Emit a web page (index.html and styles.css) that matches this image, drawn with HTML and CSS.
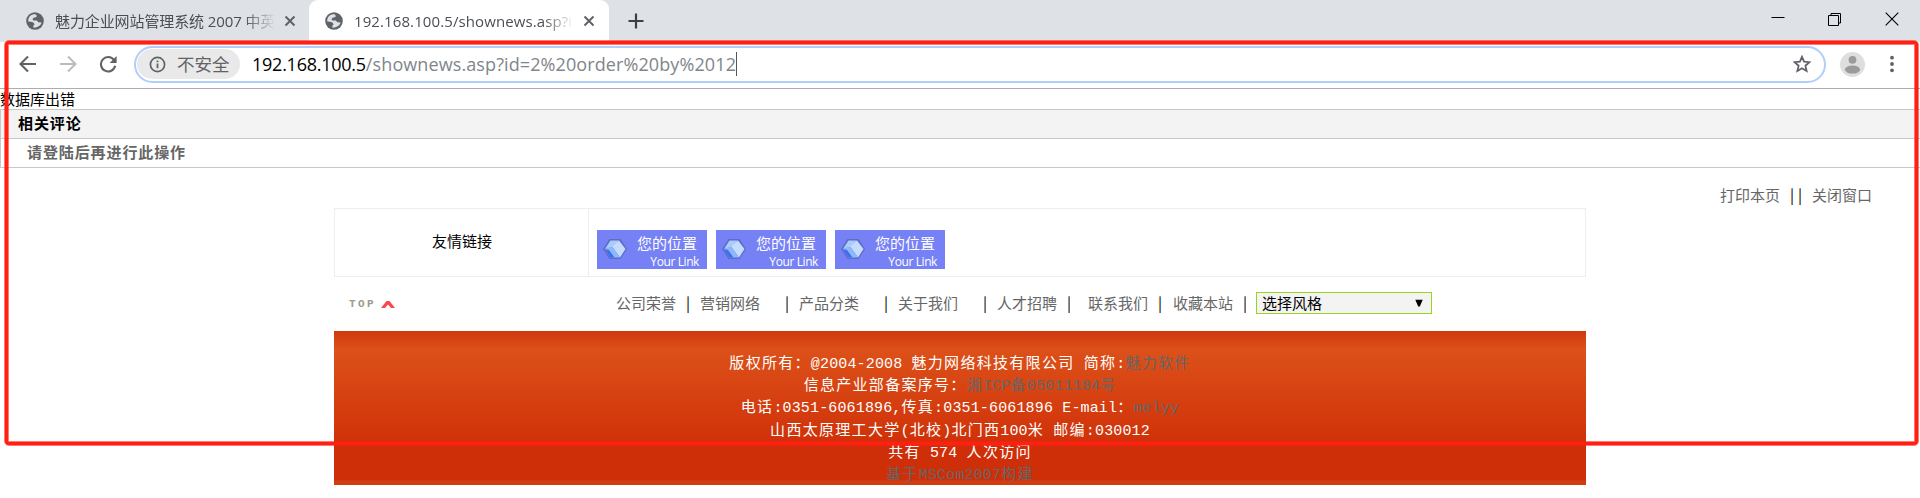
FILE: index.html
```html
<!DOCTYPE html>
<html lang="zh-CN">
<head>
<meta charset="utf-8">
<title>192.168.100.5/shownews.asp</title>
<link rel="stylesheet" href="styles.css">
</head>
<body>
<svg width="0" height="0" class="defs">
  <symbol id="globe" viewBox="0 0 18 18"><circle cx="9" cy="9" r="8.8" fill="#5f6368"/><path d="M9.500 2.200C6 2 3 4 2.300 7.200L2.200 9.500L5 9.800L7.500 10.500L8.600 12.400L7.200 13.700L7.600 15.700C11 16 14.500 14 15.600 10.600L12.300 10.200L10.800 8.600L7.300 8.400L6.500 7L8 5.600L10.200 5.300L10.800 3.700Z" fill="#dee1e6"/></symbol>
  <symbol id="cross" viewBox="0 0 12 12"><path d="M1.500 1.500L10.500 10.500M10.500 1.500L1.500 10.500" stroke="#5f6368" stroke-width="2" fill="none"/></symbol>
  <symbol id="cube" viewBox="0 0 24 20"><path d="M6.500 0H17.500L24 10L17.500 20H6.500L0 10Z" fill="#5f6bc8"/><path d="M7.500 1.500H16L9 8L2 10Z" fill="#a9ccfa"/><path d="M16 1.500L22.500 10L17 18.500L9 7.500Z" fill="#c6dcff"/><path d="M1.800 10L9 7.500L17 18.500H7.500Z" fill="#8eb8fa"/><path d="M1.800 10L6 11L11.500 18.500H7.500Z" fill="#3c6ef2"/></symbol>
</svg>

<header class="tabs">
  <div class="tab">
    <svg class="globe"><use href="#globe"/></svg>
    <span class="label label-first">魅力企业网站管理系统 2007 中英</span>
    <svg class="cross"><use href="#cross"/></svg>
  </div>
  <div class="tab active">
    <svg class="globe"><use href="#globe"/></svg>
    <span class="label label-url">192.168.100.5/shownews.asp?i</span>
    <svg class="cross"><use href="#cross"/></svg>
  </div>
  <svg class="plus" viewBox="0 0 16 16"><path d="M8 .5V15.500M.5 8H15.500" stroke="#3c4043" stroke-width="2.200"/></svg>
  <div class="controls">
    <svg viewBox="0 0 14 14"><path d="M.5 5.500H13.500" stroke="#000"/></svg>
    <svg viewBox="0 0 14 14"><path d="M.5 3.500H10.500V13.500H.5ZM3 3.500V1.500H12.500V11H10.500" fill="none" stroke="#000"/></svg>
    <svg viewBox="0 0 14 14"><path d="M.7 .7L13.300 13.300M13.300 .7L.7 13.300" stroke="#000" stroke-width="1.100"/></svg>
  </div>
</header>

<div class="toolbar">
  <svg class="back" viewBox="0 0 18 18"><path d="M17 9H2M9 1.500L1.500 9L9 16.500" fill="none" stroke="#5f6368" stroke-width="2.100"/></svg>
  <svg class="forward" viewBox="0 0 18 18"><path d="M1 9H16M9 1.500L16.500 9L9 16.500" fill="none" stroke="#babcbe" stroke-width="2"/></svg>
  <svg class="reload" viewBox="0 0 18 18"><path d="M15 5A7.200 7.200 0 1 0 16.200 10.800" fill="none" stroke="#5f6368" stroke-width="2.100"/><path d="M17.600 1V8H10.600Z" fill="#5f6368"/></svg>
  <div class="omnibox">
    <div class="chip">
      <svg viewBox="0 0 18 18"><circle cx="9" cy="9" r="7.500" fill="none" stroke="#5f6368" stroke-width="1.800"/><path d="M9 8V13M9 4.800V6.700" stroke="#5f6368" stroke-width="1.900"/></svg>
      <span>不安全</span>
    </div>
    <div class="url"><span class="host">192.168.100.5</span><span class="path">/shownews.asp?id=2%20order%20by%2012</span></div>
    <svg class="star" viewBox="0 0 18 18"><path d="M9 1.800L11.100 6.700L16.500 7.200L12.400 10.700L13.600 16L9 13.200L4.400 16L5.600 10.700L1.500 7.200L6.900 6.700Z" fill="none" stroke="#5f6368" stroke-width="1.800"/></svg>
  </div>
  <svg class="avatar" viewBox="0 0 25 25"><circle cx="12.500" cy="12.500" r="12.500" fill="#dedede"/><circle cx="12.500" cy="7.800" r="3.900" fill="#9b9b9b"/><ellipse cx="12.500" cy="17.600" rx="7.600" ry="4" fill="#9b9b9b"/></svg>
  <svg class="dots" viewBox="0 0 4 18"><circle cx="2" cy="2.700" r="1.900" fill="#5f6368"/><circle cx="2" cy="9" r="1.900" fill="#5f6368"/><circle cx="2" cy="15.300" r="1.900" fill="#5f6368"/></svg>
</div>

<main>
  <p class="error">数据库出错</p>
  <section class="comments">
    <h2>相关评论</h2>
    <p>请登陆后再进行此操作</p>
  </section>
  <div class="actions"><a>打印本页</a><i>|</i><i>|</i><a>关闭窗口</a></div>

  <div class="site">
    <section class="links">
      <div class="links-title">友情链接</div>
      <div class="banners">
        <div class="banner"><svg><use href="#cube"/></svg><div><b>您的位置</b><span>Your Link</span></div></div>
        <div class="banner"><svg><use href="#cube"/></svg><div><b>您的位置</b><span>Your Link</span></div></div>
        <div class="banner"><svg><use href="#cube"/></svg><div><b>您的位置</b><span>Your Link</span></div></div>
      </div>
    </section>
    <nav>
      <div class="top"><span>TOP</span><svg viewBox="0 0 14 8"><path d="M0 8L5.500 1H8.500L14 8H10L7 4.500L4 8Z" fill="#fb4650"/></svg></div>
      <a>公司荣誉</a><i>|</i><a>营销网络</a><i>|</i><a>产品分类</a><i>|</i><a>关于我们</a><i>|</i><a>人才招聘</a><i>|</i><a>联系我们</a><i>|</i><a>收藏本站</a><i>|</i>
      <div class="select"><span>选择风格</span><svg viewBox="0 0 8 8"><path d="M.3 .7H7.700L4.800 7.500H3.200Z"/></svg></div>
    </nav>
    <footer>
      <p>版权所有：<s>@2004-2008 </s>魅力网络科技有限公司<s> </s>简称<s>:</s><a>魅力软件</a></p>
      <p>信息产业部备案序号：<a>湘<s>ICP</s>备<s>05011184</s>号</a></p>
      <p>电话<s>:0351-6061896,</s>传真<s>:0351-6061896 E-mail</s>：<a><s>melyy</s></a></p>
      <p>山西太原理工大学<s>(</s>北校<s>)</s>北门西<s>100</s>米<s> </s>邮编<s>:030012</s></p>
      <p>共有<s> 574 </s>人次访问</p>
      <p><a>基于<s>MSCom2007</s>构建</a></p>
    </footer>
  </div>
</main>
<div class="marker"></div>
</body>
</html>
```
FILE: styles.css
```css
* { box-sizing: border-box; }
body { margin: 0; height: 498px; overflow: hidden; position: relative; background: #fff; font: 15px/20px "Noto Sans CJK SC", sans-serif; color: #000; }
svg { display: block; flex: none; }
p, h2 { margin: 0; }
i, s { font-style: normal; text-decoration: none; }
.defs { position: absolute; }

.tabs { display: flex; height: 42px; background: #dee1e6; }
.tab { display: flex; align-items: center; width: 309px; padding: 0 0 1px 26px; }
.tab.active { width: 300px; padding-left: 16px; background: #fff; border-radius: 9px 9px 0 0; }
.globe { width: 18px; height: 18px; }
.label { width: 220px; margin-left: 11px; overflow: hidden; white-space: nowrap; font: 15px/22px "Open Sans", "Noto Sans CJK SC", sans-serif; color: #4b4f54; -webkit-mask-image: linear-gradient(90deg, #000 86%, transparent); mask-image: linear-gradient(90deg, #000 86%, transparent); }
.label-first { letter-spacing: -.1px; }
.label-url { margin-left: 11px; letter-spacing: .1px; }
.cross { width: 12px; height: 12px; margin-left: 9px; }
.plus { width: 16px; height: 16px; margin: 13px 0 0 19px; }
.controls { display: flex; gap: 43px; margin: 12px 21px 0 auto; }
.controls svg { width: 14px; height: 14px; }

.toolbar { display: flex; align-items: center; height: 47px; padding: 0 26px 2px 19px; border-bottom: 1px solid #adadad; }
.back, .forward, .reload { width: 18px; height: 18px; }
.forward { margin-left: 22px; }
.reload { margin-left: 22px; }
.omnibox { display: flex; align-items: center; width: 1692px; height: 37px; margin-left: 17px; padding: 0 13px 0 1px; border: 2px solid #b1cefb; border-radius: 19px; }
.chip { display: flex; align-items: center; width: 103px; height: 30px; padding-left: 12px; gap: 11px; border-radius: 15px; background: #e9e9e9; font-size: 17.500px; color: #5f6368; white-space: nowrap; }
.chip svg { width: 17px; height: 17px; }
.url { display: flex; margin: 0 auto 0 12px; font: 18px/24px "Open Sans", sans-serif; letter-spacing: -.25px; border-right: 1px solid #555; white-space: nowrap; }
.path { color: #80868b; letter-spacing: .1px; }
.star { width: 18px; height: 18px; }
.avatar { width: 25px; height: 25px; margin-left: 14px; }
.dots { width: 4px; height: 18px; margin-left: auto; }

.error { height: 20px; line-height: 20px; }
.comments { border: 1px solid #c9c9c9; border-right: 0; height: 59px; font-weight: bold; }
.comments h2 { height: 29px; padding-left: 17px; border-bottom: 1px solid #c9c9c9; background: #f3f3f3; font-size: 15px; line-height: 25px; letter-spacing: .9px; }
.comments p { padding-left: 26px; line-height: 25px; letter-spacing: .9px; color: #666; }
.actions { display: flex; justify-content: flex-end; height: 40px; padding: 17px 48px 0 0; color: #666; }
.actions i, nav i { width: 8px; text-align: center; color: #000; }
.actions a:first-child { margin-right: 8px; }
.actions a:last-child { margin-left: 8px; }

.site { width: 1252px; margin: 0 auto; }
.links { display: flex; height: 69px; border: 1px solid #eee; }
.links-title { width: 254px; padding-left: 1px; border-right: 1px solid #eee; line-height: 64px; text-align: center; }
.banners { display: flex; gap: 9px; padding: 21px 0 0 8px; }
.banner { display: flex; gap: 11px; width: 110px; height: 39px; padding-left: 6px; background: #7681f6; color: #fff; }
.banner svg { width: 24px; height: 20px; margin-top: 9px; }
.banner div { display: flex; flex-direction: column; width: 61px; white-space: nowrap; }
.banner b { margin-left: -1px; font-weight: normal; line-height: 26px; }
.banner span { font: 12px/12px "Open Sans", sans-serif; letter-spacing: -.4px; text-align: right; }
nav { display: grid; grid-template-columns: 282px 69px 15px 84px 15px 84px 15px 84px 15px 69px 22px 69px 16px 69px 14px 176px; align-items: center; height: 54px; padding-bottom: 2px; color: #666; white-space: nowrap; }
nav i { margin-left: -1px; }
.top { display: flex; align-items: center; gap: 5px; padding: 2px 0 0 15px; font: bold 11px/12px "Liberation Mono", monospace; color: #9b9b88; letter-spacing: 2.400px; }
.top svg { width: 14px; height: 8px; }
.select { display: flex; align-items: center; justify-content: space-between; height: 22px; padding: 0 8px 0 5px; border: 1px solid #9ad51d; background: #f3f3f3; color: #000; }
.select svg { width: 8px; height: 8px; }
footer { height: 154px; padding-top: 20px; overflow: hidden; background: linear-gradient(#d1380e 0, #dc5019 18px, #da4b16 36px, #d1340a 104px, #ce2f09 112px, #ce2f09 149px, #d33b12 150px); color: #fff; text-align: center; letter-spacing: 1.300px; }
footer p { height: 22.200px; line-height: 22px; white-space: pre; }
footer s { font-family: "Liberation Mono", monospace; letter-spacing: .15px; }
footer a { color: #666; }
.marker { position: absolute; left: 4px; top: 40px; width: 1915px; height: 406px; border: 1px solid rgba(255,32,19,.6); border-radius: 5px; box-shadow: inset 0 0 0 3px #ff2013, inset 0 0 0 4px rgba(255,32,19,.6); }
```
